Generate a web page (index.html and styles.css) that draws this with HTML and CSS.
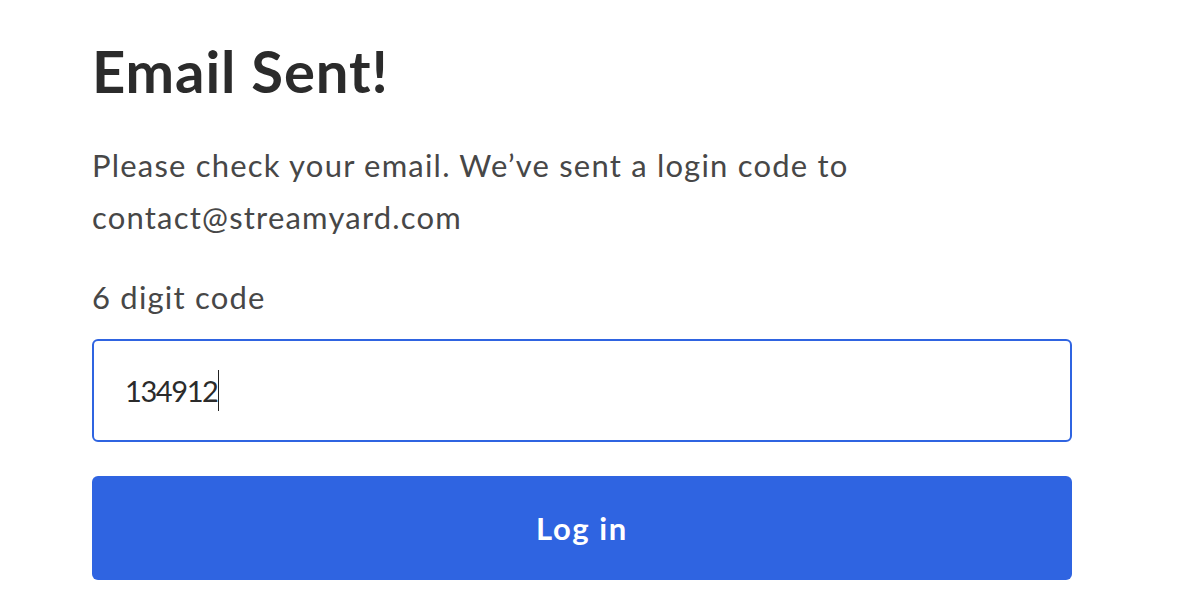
FILE: index.html
```html
<!DOCTYPE html>
<html lang="en">
<head>
    <meta charset="UTF-8">
    <title>Email Sent</title>
    <link rel="stylesheet" href="styles.css">
</head>
<body>
    <div class="login-panel">
        <h1 class="title">Email Sent!</h1>
        <p class="message">Please check your email. We’ve sent a login code to contact@streamyard.com</p>
        <div class="field">
            <label class="field-label">6 digit code</label>
            <div class="code-input"><span class="code-value">134912</span><span class="caret"></span></div>
        </div>
        <button class="login-button">Log in</button>
    </div>
</body>
</html>
```

FILE: styles.css
```css
:root {
    --primary-color: #2f64e1;
    --title-color: #2b2b2b;
    --text-color: #474747;
}
body {
    margin: 0;
    padding: 0;
    background-color: #ffffff;
    font-family: 'Lato', sans-serif;
    color: var(--text-color);
}
.login-panel {
    width: 980px;
    padding: 37px 0 0 92px;
}
.title {
    margin: 0;
    font-size: 58px;
    line-height: 68px;
    font-weight: 700;
    letter-spacing: 0.9px;
    color: var(--title-color);
}
.message {
    margin: 34px 0 0;
    font-size: 31px;
    line-height: 52px;
    letter-spacing: 1.2px;
    max-width: 800px;
}
.field {
    margin-top: 34px;
}
.field-label {
    display: block;
    font-size: 31px;
    line-height: 40px;
    letter-spacing: 1.2px;
}
.code-input {
    margin-top: 22px;
    height: 99px;
    border: 2px solid var(--primary-color);
    border-radius: 6px;
    padding-left: 31px;
    display: flex;
    align-items: center;
    font-size: 29px;
    color: var(--title-color);
}
.code-value {
    letter-spacing: -1.4px;
}
.caret {
    display: inline-block;
    width: 1px;
    height: 41px;
    margin-left: 0;
    background-color: #222222;
}
.login-button {
    display: block;
    width: 100%;
    height: 104px;
    margin-top: 34px;
    border: none;
    border-radius: 6px;
    background-color: var(--primary-color);
    color: #ffffff;
    font-family: 'Lato', sans-serif;
    font-size: 31px;
    font-weight: 700;
    letter-spacing: 1.6px;
    cursor: pointer;
}
```
